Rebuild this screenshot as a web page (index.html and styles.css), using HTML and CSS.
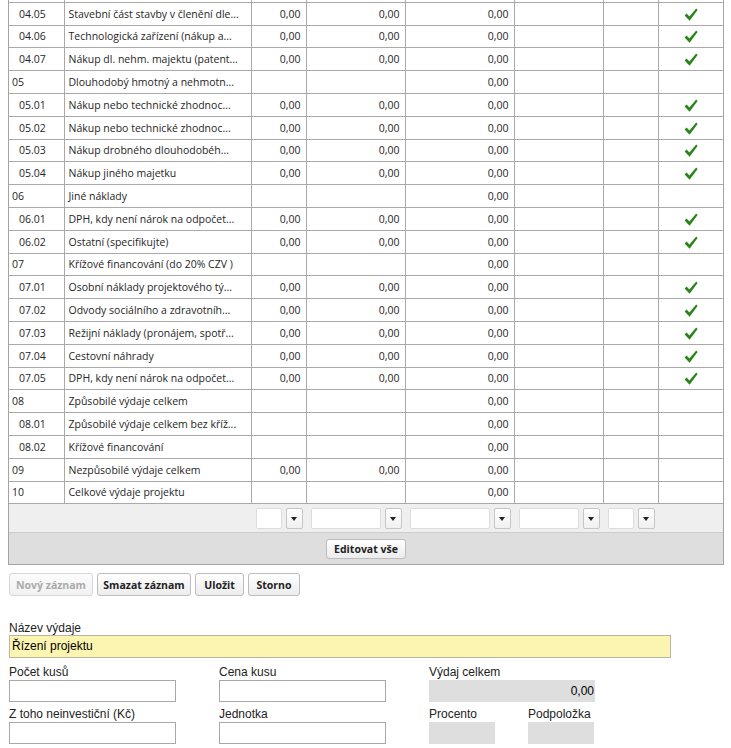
FILE: index.html
```html
<!DOCTYPE html>
<html lang="cs">
<head>
<meta charset="utf-8">
<title>Rozpočet</title>
<link rel="stylesheet" href="styles.css">
</head>
<body>
<div class="page">
  <div class="grid-box">
    <table class="grid">
      <colgroup>
        <col class="c-code"><col class="c-name"><col class="c-n1"><col class="c-n2"><col class="c-n3"><col class="c-e1"><col class="c-e2"><col class="c-chk">
      </colgroup>
      <tbody>
        <tr class="clip"><td class="code sub"></td><td class="name"></td><td class="num"></td><td class="num"></td><td class="num"></td><td></td><td></td><td class="chk"></td></tr>
        <tr><td class="code sub">04.05</td><td class="name">Stavební část stavby v členění dle...</td><td class="num">0,00</td><td class="num">0,00</td><td class="num">0,00</td><td></td><td></td><td class="chk"><svg class="tick" viewBox="0 0 14 13"><path d="M0.6 7.4 L2.6 5.6 L5.4 8.4 L12.2 0.4 L13.6 1.9 L5.6 12.8 Z"/></svg></td></tr>
        <tr><td class="code sub">04.06</td><td class="name">Technologická zařízení (nákup a...</td><td class="num">0,00</td><td class="num">0,00</td><td class="num">0,00</td><td></td><td></td><td class="chk"><svg class="tick" viewBox="0 0 14 13"><path d="M0.6 7.4 L2.6 5.6 L5.4 8.4 L12.2 0.4 L13.6 1.9 L5.6 12.8 Z"/></svg></td></tr>
        <tr><td class="code sub">04.07</td><td class="name">Nákup dl. nehm. majektu (patent...</td><td class="num">0,00</td><td class="num">0,00</td><td class="num">0,00</td><td></td><td></td><td class="chk"><svg class="tick" viewBox="0 0 14 13"><path d="M0.6 7.4 L2.6 5.6 L5.4 8.4 L12.2 0.4 L13.6 1.9 L5.6 12.8 Z"/></svg></td></tr>
        <tr><td class="code">05</td><td class="name">Dlouhodobý hmotný a nehmotn...</td><td class="num"></td><td class="num"></td><td class="num">0,00</td><td></td><td></td><td class="chk"></td></tr>
        <tr><td class="code sub">05.01</td><td class="name">Nákup nebo technické zhodnoc...</td><td class="num">0,00</td><td class="num">0,00</td><td class="num">0,00</td><td></td><td></td><td class="chk"><svg class="tick" viewBox="0 0 14 13"><path d="M0.6 7.4 L2.6 5.6 L5.4 8.4 L12.2 0.4 L13.6 1.9 L5.6 12.8 Z"/></svg></td></tr>
        <tr><td class="code sub">05.02</td><td class="name">Nákup nebo technické zhodnoc...</td><td class="num">0,00</td><td class="num">0,00</td><td class="num">0,00</td><td></td><td></td><td class="chk"><svg class="tick" viewBox="0 0 14 13"><path d="M0.6 7.4 L2.6 5.6 L5.4 8.4 L12.2 0.4 L13.6 1.9 L5.6 12.8 Z"/></svg></td></tr>
        <tr><td class="code sub">05.03</td><td class="name">Nákup drobného dlouhodobéh...</td><td class="num">0,00</td><td class="num">0,00</td><td class="num">0,00</td><td></td><td></td><td class="chk"><svg class="tick" viewBox="0 0 14 13"><path d="M0.6 7.4 L2.6 5.6 L5.4 8.4 L12.2 0.4 L13.6 1.9 L5.6 12.8 Z"/></svg></td></tr>
        <tr><td class="code sub">05.04</td><td class="name">Nákup jiného majetku</td><td class="num">0,00</td><td class="num">0,00</td><td class="num">0,00</td><td></td><td></td><td class="chk"><svg class="tick" viewBox="0 0 14 13"><path d="M0.6 7.4 L2.6 5.6 L5.4 8.4 L12.2 0.4 L13.6 1.9 L5.6 12.8 Z"/></svg></td></tr>
        <tr><td class="code">06</td><td class="name">Jiné náklady</td><td class="num"></td><td class="num"></td><td class="num">0,00</td><td></td><td></td><td class="chk"></td></tr>
        <tr><td class="code sub">06.01</td><td class="name">DPH, kdy není nárok na odpočet...</td><td class="num">0,00</td><td class="num">0,00</td><td class="num">0,00</td><td></td><td></td><td class="chk"><svg class="tick" viewBox="0 0 14 13"><path d="M0.6 7.4 L2.6 5.6 L5.4 8.4 L12.2 0.4 L13.6 1.9 L5.6 12.8 Z"/></svg></td></tr>
        <tr><td class="code sub">06.02</td><td class="name">Ostatní (specifikujte)</td><td class="num">0,00</td><td class="num">0,00</td><td class="num">0,00</td><td></td><td></td><td class="chk"><svg class="tick" viewBox="0 0 14 13"><path d="M0.6 7.4 L2.6 5.6 L5.4 8.4 L12.2 0.4 L13.6 1.9 L5.6 12.8 Z"/></svg></td></tr>
        <tr><td class="code">07</td><td class="name">Křížové financování (do 20% CZV )</td><td class="num"></td><td class="num"></td><td class="num">0,00</td><td></td><td></td><td class="chk"></td></tr>
        <tr><td class="code sub">07.01</td><td class="name">Osobní náklady projektového tý...</td><td class="num">0,00</td><td class="num">0,00</td><td class="num">0,00</td><td></td><td></td><td class="chk"><svg class="tick" viewBox="0 0 14 13"><path d="M0.6 7.4 L2.6 5.6 L5.4 8.4 L12.2 0.4 L13.6 1.9 L5.6 12.8 Z"/></svg></td></tr>
        <tr><td class="code sub">07.02</td><td class="name">Odvody sociálního a zdravotníh...</td><td class="num">0,00</td><td class="num">0,00</td><td class="num">0,00</td><td></td><td></td><td class="chk"><svg class="tick" viewBox="0 0 14 13"><path d="M0.6 7.4 L2.6 5.6 L5.4 8.4 L12.2 0.4 L13.6 1.9 L5.6 12.8 Z"/></svg></td></tr>
        <tr><td class="code sub">07.03</td><td class="name">Režijní náklady (pronájem, spotř...</td><td class="num">0,00</td><td class="num">0,00</td><td class="num">0,00</td><td></td><td></td><td class="chk"><svg class="tick" viewBox="0 0 14 13"><path d="M0.6 7.4 L2.6 5.6 L5.4 8.4 L12.2 0.4 L13.6 1.9 L5.6 12.8 Z"/></svg></td></tr>
        <tr><td class="code sub">07.04</td><td class="name">Cestovní náhrady</td><td class="num">0,00</td><td class="num">0,00</td><td class="num">0,00</td><td></td><td></td><td class="chk"><svg class="tick" viewBox="0 0 14 13"><path d="M0.6 7.4 L2.6 5.6 L5.4 8.4 L12.2 0.4 L13.6 1.9 L5.6 12.8 Z"/></svg></td></tr>
        <tr><td class="code sub">07.05</td><td class="name">DPH, kdy není nárok na odpočet...</td><td class="num">0,00</td><td class="num">0,00</td><td class="num">0,00</td><td></td><td></td><td class="chk"><svg class="tick" viewBox="0 0 14 13"><path d="M0.6 7.4 L2.6 5.6 L5.4 8.4 L12.2 0.4 L13.6 1.9 L5.6 12.8 Z"/></svg></td></tr>
        <tr><td class="code">08</td><td class="name">Způsobilé výdaje celkem</td><td class="num"></td><td class="num"></td><td class="num">0,00</td><td></td><td></td><td class="chk"></td></tr>
        <tr><td class="code sub">08.01</td><td class="name">Způsobilé výdaje celkem bez kříž...</td><td class="num"></td><td class="num"></td><td class="num">0,00</td><td></td><td></td><td class="chk"></td></tr>
        <tr><td class="code sub">08.02</td><td class="name">Křížové financování</td><td class="num"></td><td class="num"></td><td class="num">0,00</td><td></td><td></td><td class="chk"></td></tr>
        <tr><td class="code">09</td><td class="name">Nezpůsobilé výdaje celkem</td><td class="num">0,00</td><td class="num">0,00</td><td class="num">0,00</td><td></td><td></td><td class="chk"></td></tr>
        <tr><td class="code">10</td><td class="name">Celkové výdaje projektu</td><td class="num"></td><td class="num"></td><td class="num">0,00</td><td></td><td></td><td class="chk"></td></tr>
      </tbody>
    </table>
    <div class="filter-row">
      <div></div><div></div>
      <div class="fcell"><span class="finput"></span><span class="fbtn"></span></div>
      <div class="fcell"><span class="finput"></span><span class="fbtn"></span></div>
      <div class="fcell"><span class="finput"></span><span class="fbtn"></span></div>
      <div class="fcell"><span class="finput"></span><span class="fbtn"></span></div>
      <div class="fcell"><span class="finput"></span><span class="fbtn"></span></div>
      <div></div>
    </div>
    <div class="edit-bar"><button class="btn">Editovat vše</button></div>
  </div>

  <div class="actions">
    <button class="btn btn-new" disabled>Nový záznam</button>
    <button class="btn btn-del">Smazat záznam</button>
    <button class="btn btn-save">Uložit</button>
    <button class="btn btn-cancel">Storno</button>
  </div>

  <form class="detail">
    <div class="field">
      <label>Název výdaje</label>
      <div class="inp inp-name">Řízení projektu</div>
    </div>
    <div class="row row2">
      <div class="field w167"><label>Počet kusů</label><div class="inp"></div></div>
      <div class="field w167"><label>Cena kusu</label><div class="inp"></div></div>
      <div class="field w166"><label>Výdaj celkem</label><div class="inp ro num-ro">0,00</div></div>
    </div>
    <div class="row row3">
      <div class="field w167"><label>Z toho neinvestiční (Kč)</label><div class="inp"></div></div>
      <div class="field w167"><label>Jednotka</label><div class="inp"></div></div>
      <div class="pair">
        <div class="field w66"><label>Procento</label><div class="inp ro"></div></div>
        <div class="field w66"><label>Podpoložka</label><div class="inp ro"></div></div>
      </div>
    </div>
  </form>
</div>
</body>
</html>
```
FILE: styles.css
```css
html, body { margin: 0; padding: 0; background: #fff; }
body { font-family: "Open Sans", "DejaVu Sans", sans-serif; color: #333; }
.page { padding: 0 7px 0 8px; }

.grid-box {
  width: 714px;
  border: 1px solid #a4a4a4;
  border-top: none;
  margin-top: -21px;
}
.grid {
  width: 714px;
  table-layout: fixed;
  border-collapse: collapse;
  font-size: 10.5px;
}
.c-code { width: 55px; }
.c-name { width: 187px; }
.c-n1 { width: 55px; }
.c-n2 { width: 99px; }
.c-n3 { width: 109px; }
.c-e1 { width: 89px; }
.c-e2 { width: 55px; }
.c-chk { width: 65px; }

.grid td {
  height: 21.8px;
  padding: 0 5px;
  border: 1px solid #a9a9a9;
  white-space: nowrap;
  overflow: hidden;
  vertical-align: middle;
  line-height: 14px;
  color: #262626;
}
.grid td:first-child { border-left: none; }
.grid td:last-child { border-right: none; }
.grid td.code { padding-left: 3px; }
.grid td.code.sub { padding-left: 10px; }
.grid td.name { padding-left: 4px; }
.grid td.num { text-align: right; padding-right: 5px; }
.grid td.chk { text-align: center; padding: 0; }
.tick { width: 14px; height: 13px; display: block; margin: 1px auto 0; fill: #2a8519; }

.filter-row {
  display: grid;
  grid-template-columns: 56px 187px 55px 99px 109px 89px 55px 64px;
  height: 28px;
  align-items: center;
  background: #efefef;
  border-bottom: 1px solid #cdcdcd;
}
.fcell { display: flex; align-items: center; gap: 4px; padding: 0 4px; }
.finput {
  flex: 1;
  height: 19px;
  background: #fff;
  border: 1px solid #dcdcdc;
  border-radius: 2px;
}
.fbtn {
  position: relative;
  width: 15px;
  height: 19px;
  background: linear-gradient(#ffffff, #f0f0f0);
  border: 1px solid #c6c6c6;
  border-radius: 2px;
}
.fbtn::after {
  content: "";
  position: absolute;
  left: 4px;
  top: 8px;
  border-left: 3.5px solid transparent;
  border-right: 3.5px solid transparent;
  border-top: 4px solid #222;
}

.edit-bar {
  height: 31px;
  background: #dedede;
  display: flex;
  align-items: center;
  justify-content: center;
}

.btn {
  font-family: "Open Sans", "DejaVu Sans", sans-serif;
  font-weight: bold;
  font-size: 10.5px;
  color: #222;
  height: 21px;
  padding: 0;
  white-space: nowrap;
  background: linear-gradient(#ffffff, #ececec);
  border: 1px solid #bdbdbd;
  border-radius: 3px;
  line-height: 18px;
}
.edit-bar .btn { height: 20px; width: 80px; }

.actions {
  display: flex;
  gap: 4px;
  margin-top: 8px;
  padding-left: 1px;
}
.actions .btn { height: 23px; }
.btn-new { width: 84px; color: #aaa; border-color: #d6d6d6; background: linear-gradient(#fcfcfc, #f1f1f1); }
.btn-del { width: 94px; }
.btn-save { width: 49px; }
.btn-cancel { width: 52px; }

.detail {
  margin-top: 25px;
  padding-left: 1px;
  font-family: "Liberation Sans", Arial, sans-serif;
  font-size: 12px;
  color: #222;
}
.field label { display: block; line-height: 14px; height: 14px; }
.inp {
  box-sizing: border-box;
  height: 22px;
  border: 1px solid #a8a8a8;
  background: #fff;
  line-height: 20px;
  padding: 0 3px;
  color: #000;
}
.inp-name {
  width: 662px;
  height: 23px;
  margin-top: 0;
  background: #fcf5b1;
  border-color: #b9b5a0;
  padding-left: 2px;
}
.row { display: flex; }
.row2 { margin-top: 7px; }
.row3 { margin-top: 5px; }
.row .field label { margin-bottom: 1px; }
.w167 { width: 167px; margin-right: 43px; }
.w166 { width: 166px; }
.w66 { width: 66px; }
.pair { display: flex; gap: 33px; }
.inp.ro { background: #dedede; border: none; }
.num-ro { text-align: right; line-height: 22px; padding-right: 1px; }
```
